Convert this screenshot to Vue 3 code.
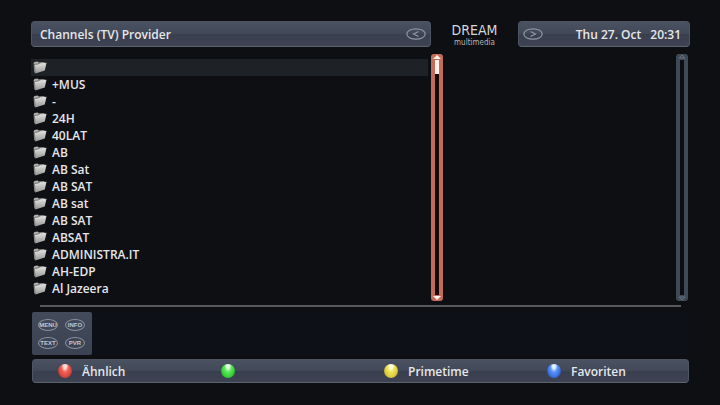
<script setup>
import { ref } from 'vue'

const providers = ['', '+MUS', '-', '24H', '40LAT', 'AB', 'AB Sat', 'AB SAT', 'AB sat', 'AB SAT', 'ABSAT', 'ADMINISTRA.IT', 'AH-EDP', 'Al Jazeera']
const selected = ref(0)

const keys = ['MENU', 'INFO', 'TEXT', 'PVR']
const actions = [
  { color: 'red', label: 'Ähnlich' },
  { color: 'green', label: '' },
  { color: 'yellow', label: 'Primetime' },
  { color: 'blue', label: 'Favoriten' }
]
</script>

<template>
  <div class="screen">
    <header class="top">
      <div class="bar">
        <h1 class="title">Channels (TV) Provider</h1>
        <button class="nav" type="button" aria-label="Previous">
          <svg width="20" height="12" viewBox="0 0 20 12">
            <ellipse cx="10" cy="6" rx="9.2" ry="5.2" />
            <path d="M12.5 3.5 L7.5 6 L12.5 8.5" />
          </svg>
        </button>
      </div>
      <div class="logo">
        <span class="logo-main">DREAM</span>
        <span class="logo-sub">multimedia</span>
      </div>
      <div class="bar">
        <button class="nav" type="button" aria-label="Next">
          <svg width="20" height="12" viewBox="0 0 20 12">
            <ellipse cx="10" cy="6" rx="9.2" ry="5.2" />
            <path d="M7.5 3.5 L12.5 6 L7.5 8.5" />
          </svg>
        </button>
        <div class="clock"><span>Thu 27. Oct</span><span>20:31</span></div>
      </div>
    </header>

    <main class="content">
      <ul class="list">
        <li v-for="(name, i) in providers" :key="i">
          <button class="row" :class="{ active: i === selected }" type="button" :aria-label="name || 'Unnamed'" @click="selected = i">
            <svg class="folder" width="14" height="13" viewBox="0 0 14 13">
              <path d="M.6 2.6 L1.4 1 L4.6 .5 L5.6 1.6 L11 .9 L12 3 L2 5 Z" fill="#b2b2b0" />
              <path d="M.6 2.4 L2.4 4.6 L2.8 12.2 L1.2 11.2 Z" fill="#858684" />
              <path d="M2 4.6 L5.8 4 L7 2.8 L13.4 2.2 L11.8 9.6 L2.4 12.4 Z" fill="url(#folderFace)" />
              <path d="M1.6 3.4 L5.4 2.9 L6.4 2.2 L11 1.8" fill="none" stroke="#4b4c4e" stroke-width=".6" />
              <path d="M2 4.6 L5.8 4 L7 2.8 L13.4 2.2" fill="none" stroke="#eeeeec" stroke-width=".7" />
            </svg>
            <span>{{ name }}</span>
          </button>
        </li>
      </ul>
      <div class="scroll hot">
        <svg class="cap" width="12" height="6" viewBox="0 0 12 6"><path d="M6 1 L10 5 H2 Z" /></svg>
        <div class="track"><div class="thumb"></div></div>
        <svg class="cap" width="12" height="6" viewBox="0 0 12 6"><path d="M2 1 H10 L6 5 Z" /></svg>
      </div>
      <div class="preview"></div>
      <div class="scroll">
        <svg class="cap" width="12" height="6" viewBox="0 0 12 6"><path d="M6 1 L9 4 H3 Z" /></svg>
        <div class="track"></div>
        <svg class="cap" width="12" height="6" viewBox="0 0 12 6"><path d="M3 2 H9 L6 5 Z" /></svg>
      </div>
    </main>

    <hr class="rule">

    <section class="info">
      <div class="keys">
        <button v-for="key in keys" :key="key" class="key" type="button">{{ key }}</button>
      </div>
    </section>

    <footer class="actions">
      <button v-for="a in actions" :key="a.color" class="action" type="button" :aria-label="a.label || a.color">
        <span class="light" :class="a.color"></span>
        <span>{{ a.label }}</span>
      </button>
    </footer>

    <svg class="defs" width="0" height="0" aria-hidden="true">
      <linearGradient id="folderFace" x1="0" y1="0" x2="0" y2="1">
        <stop offset="0" stop-color="#dededb" />
        <stop offset=".5" stop-color="#bcbcba" />
        <stop offset="1" stop-color="#969695" />
      </linearGradient>
    </svg>
  </div>
</template>

<style>
body {
  margin: 0;
  background: #0e0f13;
}
</style>

<style scoped>
.screen {
  padding: 21px 30px 21px 31px;
  color: #e6e7ea;
  font-family: "Open Sans", "Noto Sans", sans-serif;
  font-size: 12px;
  font-weight: 600;
  line-height: 17px;
}
button {
  margin: 0;
  padding: 0;
  border: 0;
  background: none;
  color: inherit;
  font: inherit;
}
.top {
  display: grid;
  grid-template-columns: minmax(0, 1fr) 87px 172px;
}
.bar {
  display: flex;
  align-items: center;
  justify-content: space-between;
  height: 26px;
  padding: 0 4px 0 8px;
  box-sizing: border-box;
  border: 1px solid #4d5563;
  border-bottom-color: #5b6370;
  border-radius: 4px;
  background: linear-gradient(#4a5160, #414857 50%, #393f4f 52%, #3e4354);
}
.bar:last-child {
  padding: 0 8px 0 4px;
}
.title {
  margin: 0;
  font-size: 12px;
  font-weight: 600;
}
.nav {
  display: flex;
}
.nav svg {
  fill: none;
  stroke: #8f97a6;
  stroke-width: 1.2;
}
.clock {
  display: flex;
  gap: 9px;
}
.logo {
  display: flex;
  flex-direction: column;
  align-items: center;
  font-family: "DejaVu Sans Condensed", "DejaVu Sans", sans-serif;
}
.logo-main {
  color: #d4d6d8;
  font-size: 14px;
  font-weight: 400;
  line-height: 18px;
}
.logo-sub {
  color: #b2b4b7;
  font-size: 8px;
  font-weight: 400;
  line-height: 8px;
}
.content {
  display: flex;
  margin-top: 7px;
}
.list {
  flex: 1;
  margin: 5px 3px 4px 0;
  padding: 0;
  list-style: none;
}
.row {
  display: flex;
  align-items: center;
  gap: 5px;
  width: 100%;
  height: 17px;
  padding-left: 2px;
  text-align: left;
}
.row.active {
  background: #1e2226;
}
.folder {
  flex: none;
}
.scroll {
  display: flex;
  flex-direction: column;
  width: 12px;
  border-radius: 3px;
  overflow: hidden;
  background: #404a57;
}
.cap {
  fill: none;
  stroke: #667180;
}
.track {
  flex: 1;
  margin: 0 4px;
  background: #0c0e14;
}
.hot {
  background: #c56b5a;
}
.hot .cap {
  fill: #fff3ea;
  stroke: none;
}
.hot .track {
  background: #14090b;
}
.thumb {
  height: 14px;
  background: #fdf1ee;
}
.preview {
  width: 233px;
}
.scroll:last-child {
  margin-right: 2px;
}
.rule {
  height: 2px;
  margin: 4px 9px 5px;
  border: 0;
  background: #58585a;
}
.info {
  display: flex;
  margin: 0 1px;
  background: #0d1017;
}
.keys {
  display: grid;
  grid-template-columns: 20px 20px;
  gap: 6px 7px;
  width: 60px;
  height: 43px;
  padding: 0 6px;
  box-sizing: border-box;
  border-radius: 2px;
  align-content: center;
  background: linear-gradient(#434a59, #3b4252);
}
.key {
  height: 12px;
  box-sizing: border-box;
  border: 1px solid #8b93a3;
  border-radius: 50%;
  color: #c2c8d4;
  font-family: "Liberation Sans", sans-serif;
  font-size: 6px;
  font-weight: 700;
  line-height: 10px;
  text-align: center;
}
.actions {
  display: grid;
  grid-template-columns: repeat(4, 1fr);
  height: 24px;
  margin: 4px 1px 0;
  padding-right: 3px;
  box-sizing: border-box;
  border: 1px solid #4d5563;
  border-bottom-color: #5b6370;
  border-radius: 4px;
  background: linear-gradient(#4a5160, #414857 50%, #393f4f 52%, #3e4354);
}
.action {
  display: flex;
  align-items: center;
  gap: 10px;
  padding-left: 25px;
  text-align: left;
}
.light {
  width: 14px;
  height: 14px;
  border-radius: 50%;
}
.red {
  background: radial-gradient(ellipse at 50% 15%, #ffdcd4 0 15%, #f0655a 35%, #d8473f 65%, #7c2020);
}
.green {
  background: radial-gradient(ellipse at 50% 15%, #e0ffe0 0 15%, #5ce85c 35%, #35d235 65%, #1c7224);
}
.yellow {
  background: radial-gradient(ellipse at 50% 15%, #fffde0 0 15%, #f0e45c 35%, #dccb3c 65%, #776c1c);
}
.blue {
  background: radial-gradient(ellipse at 50% 15%, #e0f0ff 0 15%, #5c98f4 35%, #3c70e0 65%, #1c3478);
}
.defs {
  position: absolute;
}
</style>
